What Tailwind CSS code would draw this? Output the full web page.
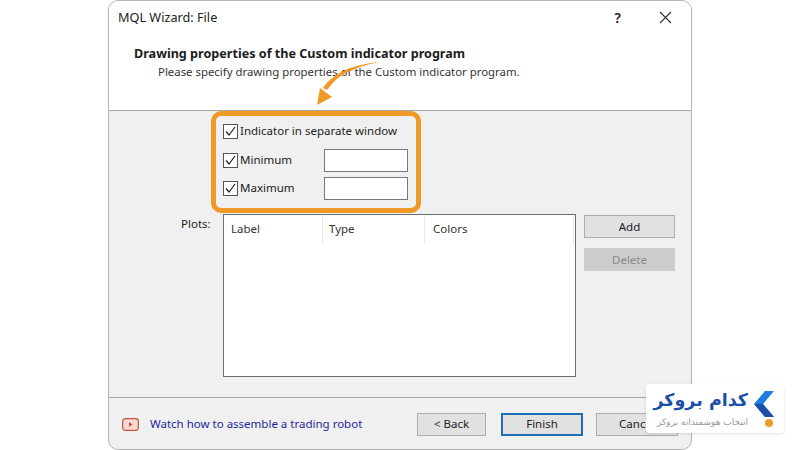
<!DOCTYPE html>
<html lang="en">

<head>
    <meta charset="UTF-8">
    <title>MQL Wizard: File</title>
    <script src="https://cdn.jsdelivr.net/npm/@tailwindcss/browser@4"></script>
</head>

<body class="bg-white w-[800px] h-[450px] overflow-hidden relative font-['Noto_Sans',sans-serif] text-[11.5px] text-[#222]">
    <!-- Wizard window -->
    <div class="relative ml-[108px] w-[584px] h-[450px] flex flex-col border border-[#b5b5b5] rounded-[10px] overflow-hidden bg-[#f0f0f0]">
        <!-- Header -->
        <div class="h-[110px] shrink-0 bg-white border-b border-[#a8a8a8]">
            <div class="flex items-center h-[33px] pl-[9px]">
                <span class="text-[12.7px]">MQL Wizard: File</span>
                <span class="ml-auto font-semibold text-[14px]">?</span>
                <svg class="ml-[38px] mr-[19px]" width="13" height="13" viewBox="0 0 13 13" fill="none" stroke="#333" stroke-width="1.1"><path d="M1 1 12 12M12 1 1 12" /></svg>
            </div>
            <p class="mt-[11px] pl-[25px] font-bold text-[12.6px] leading-[18px] text-[#1c1c1c]">Drawing properties of the Custom indicator program</p>
            <p class="pl-[49px] leading-[17px] text-[11.4px] text-[#333]">Please specify drawing properties of the Custom indicator program.</p>
        </div>

        <!-- Body -->
        <div class="h-[287px] shrink-0 border-b border-[#a8a8a8] flex flex-col">
            <!-- Orange highlight -->
            <div class="ml-[102px] w-[210px] h-[102px] border-[5px] border-[#ef9a26] rounded-[10px] flex flex-col pl-[7px] pr-[8px]">
                <label class="flex items-center gap-[2px] mt-[6px] h-[18px]">
                    <svg width="15" height="15" viewBox="0 0 15 15" fill="none"><rect x=".5" y=".5" width="14" height="14" fill="#fff" stroke="#555" /><path d="M3 7.500 6 11l6-8" stroke="#222" stroke-width="1.200" /></svg>
                    Indicator in separate window
                </label>
                <div class="flex items-center justify-between mt-[8px] h-[24px]">
                    <label class="flex items-center gap-[2px]">
                        <svg width="15" height="15" viewBox="0 0 15 15" fill="none"><rect x=".5" y=".5" width="14" height="14" fill="#fff" stroke="#555" /><path d="M3 7.500 6 11l6-8" stroke="#222" stroke-width="1.200" /></svg>
                        Minimum
                    </label>
                    <div class="w-[84px] h-[23px] bg-white border border-[#777]"></div>
                </div>
                <div class="flex items-center justify-between mt-[4px] h-[24px]">
                    <label class="flex items-center gap-[2px]">
                        <svg width="15" height="15" viewBox="0 0 15 15" fill="none"><rect x=".5" y=".5" width="14" height="14" fill="#fff" stroke="#555" /><path d="M3 7.500 6 11l6-8" stroke="#222" stroke-width="1.200" /></svg>
                        Maximum
                    </label>
                    <div class="w-[84px] h-[23px] bg-white border border-[#777]"></div>
                </div>
            </div>

            <!-- Plots -->
            <div class="flex mt-[1px]">
                <span class="ml-[72px] w-[42px] mt-[1px] leading-[18px]">Plots:</span>
                <div class="w-[353px] h-[163px] bg-white border border-[#6f6f6f]">
                    <div class="flex h-[29px] text-[#333]">
                        <span class="w-[99px] pl-[7px] pt-[5px] border-r border-[#e8e8e8]">Label</span>
                        <span class="w-[102px] pl-[6px] pt-[5px] border-r border-[#e8e8e8]">Type</span>
                        <span class="w-[149px] pl-[8px] pt-[5px] border-r border-[#e8e8e8]">Colors</span>
                    </div>
                </div>
                <div class="ml-[8px] mt-[1px] flex flex-col gap-[10px]">
                    <button class="w-[91px] h-[23px] bg-[#e1e1e1] border border-[#adadad]">Add</button>
                    <button class="w-[91px] h-[23px] bg-[#cccccc] text-[#8a8a8a]">Delete</button>
                </div>
            </div>
        </div>

        <!-- Footer -->
        <div class="flex-1 flex items-center pl-[13px] pt-[1px]">
            <svg width="17" height="13" viewBox="0 0 17 13" fill="#f7d9d3" stroke="#c9503c" stroke-width="1.2"><rect x=".7" y=".7" width="15.6" height="11.6" rx="2.5" /><path d="M7 4v5l3.500-2.500z" fill="#c9503c" stroke="none" /></svg>
            <a class="ml-[11px] w-[213px] whitespace-nowrap text-[#1f1f9e]">Watch how to assemble a trading robot</a>
            <button class="ml-[54px] w-[69px] h-[23px] bg-[#e1e1e1] border border-[#adadad] shrink-0">&lt; Back</button>
            <button class="ml-[15px] w-[82px] h-[23px] bg-[#e1e1e1] border-2 border-[#1f6fb5] shrink-0">Finish</button>
            <button class="ml-[13px] w-[82px] h-[23px] bg-[#e1e1e1] border border-[#adadad] shrink-0">Cancel</button>
        </div>
    </div>

    <!-- Arrow pointing at the highlighted box -->
    <svg class="absolute left-[310px] top-[58px]" width="72" height="50" viewBox="0 0 72 50" fill="none">
        <path d="M71 4C45 8 27 17 17 32L13 30C24 14 44 6 71 4z" fill="#ef9a26" />
        <path d="M7 47 10 30 22 39z" fill="#ef9a26" />
    </svg>

    <!-- Logo badge -->
    <div class="absolute left-[646px] top-[384px] w-[138px] h-[49px] bg-white rounded-[4px] shadow-[0_1px_3px_rgba(0,0,0,0.12)] flex justify-end pr-[9px]">
        <div dir="rtl" class="flex flex-col items-start mr-[5px] font-['DejaVu_Sans',sans-serif]">
            <span class="text-[#1c4fa8] font-bold text-[17.5px] leading-[25px] mt-[4px] whitespace-nowrap">کدام بروکر</span>
            <span class="text-[#999] text-[9px] leading-[12px] mt-[3px] whitespace-nowrap">انتخاب هوشمندانه بروکر</span>
        </div>
        <div class="relative w-[22px]">
            <svg class="absolute left-0 top-[7px]" width="22" height="27" viewBox="0 0 22 27"><path d="M12 0h9L10 13l11 13h-9L1 13z" fill="#1f7de0" /><path d="M1 13h9l11 13h-9z" fill="#1c4fa8" /></svg>
            <span class="absolute left-[12px] top-[35px] w-[8px] h-[8px] rounded-full bg-[#f09a27]"></span>
        </div>
    </div>
</body>

</html>
